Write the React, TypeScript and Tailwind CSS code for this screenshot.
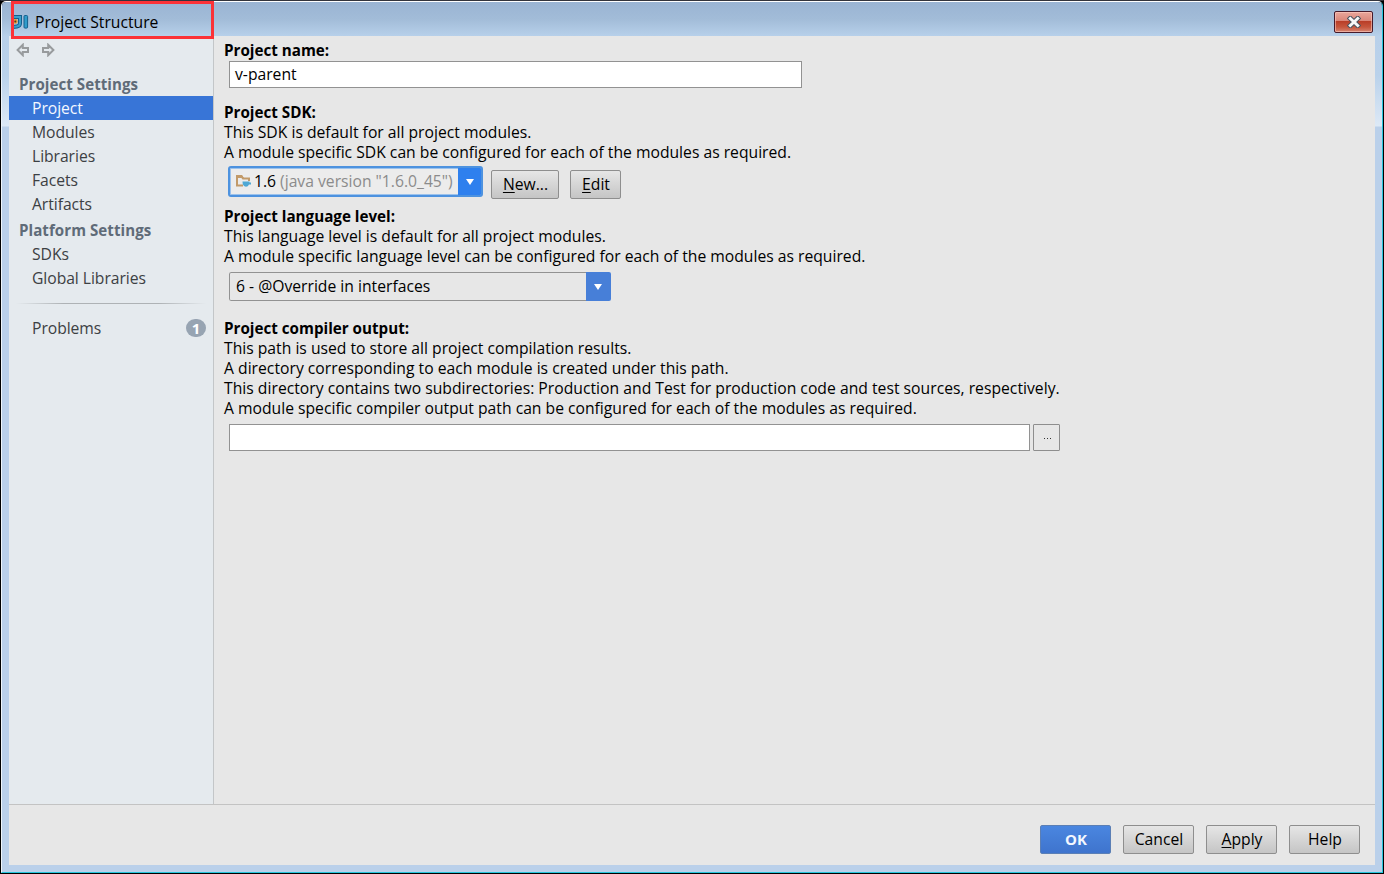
import React from "react";

function NavItem({ label, active = false }: { label: string; active?: boolean }) {
  return (
    <div className={"flex h-6 items-center pt-[2px] pl-[23px] tracking-[-0.05px] " + (active ? "bg-[#3875d7] text-[#f4f8ff]" : "text-[#3c4043]")}>
      {label}
    </div>
  );
}

function Heading({ children }: { children: string }) {
  return <div className="flex h-6 items-center pl-[10px] text-[15.1px] font-bold tracking-[0.05px] text-[#5f6b78]">{children}</div>;
}

function Title({ children }: { children: string }) {
  return <div className="text-[15.2px] leading-5 font-bold">{children}</div>;
}

function Button({ children, primary = false, className = "" }: { children: React.ReactNode; primary?: boolean; className?: string }) {
  return (
    <button
      className={
        "flex h-[29px] items-center justify-center rounded-[2px] border bg-linear-to-b pl-px " +
        (primary
          ? "border-[#5b7fb5] from-[#4a86e0] to-[#3f74cd] text-[15px] font-bold text-[#f3f7ff] "
          : "border-[#8e8e8e] from-[#e6e6e6] to-[#c5c5c5] ") +
        className
      }
    >
      {children}
    </button>
  );
}

function Arrow({ flip = false }: { flip?: boolean }) {
  return (
    <svg width="14" height="14" viewBox="0 0 14 14" className={flip ? "-scale-x-100" : ""}>
      <path d="M1.6 7 6.8 1.8V5H12v4H6.8v3.2Z" fill="none" stroke="#989b9d" strokeWidth="2" />
    </svg>
  );
}

function Caret() {
  return (
    <svg width="8" height="6" viewBox="0 0 8 6">
      <path d="M0 0h8L4 6Z" fill="#fff" />
    </svg>
  );
}

export default function App() {
  return (
    <div className="relative flex h-[874px] w-[1384px] flex-col overflow-hidden border border-t-[#33343c] border-r-black border-b-black border-l-black bg-black font-['Open_Sans','Noto_Sans',sans-serif] text-[15.7px] text-black">
      <div className="flex min-h-0 flex-1 flex-col overflow-hidden rounded-t-[5px] border border-t-white border-r-[#27c5dc] border-b-[#27c5dc] border-l-[#eef5fb]">
        <header className="flex h-[34px] shrink-0 items-center justify-between bg-linear-to-b from-[#9ab4d3] via-[#a2bcd8] to-[#b7d0ea] pr-[9px] pl-[11px]">
          <div className="flex items-center gap-[6px] pt-[5px]">
            <svg width="16" height="14" viewBox="0 0 16 14">
              <path d="M0 2h7v6.2Q7 11 4 11.4L0 12" fill="none" stroke="#145f8d" strokeWidth="4" />
              <path d="M0 2h7v6.2Q7 11 4 11.4L0 12" fill="none" stroke="#399fca" strokeWidth="2" />
              <circle cx="2.3" cy="6.4" r="2.3" fill="#e39a31" />
              <circle cx="2.3" cy="6.4" r="1" fill="#4c3b29" />
              <rect x="11" y=".5" width="3.6" height="12.6" rx="1" fill="#309cca" stroke="#145f8d" />
            </svg>
            <span className="leading-5">Project Structure</span>
          </div>
          <button className="mt-[6px] flex h-[22px] w-[39px] items-center justify-center rounded-[2px] border border-[#461a2a] bg-[linear-gradient(#e9a69b_0%,#d98578_46%,#b93e28_47%,#c6563d_75%,#d58472_100%)] shadow-[inset_0_0_0_1px_rgba(255,210,200,0.55)]">
            <svg width="14" height="12" viewBox="0 0 14 12">
              <path d="m3.300 2.500 7.400 7M10.700 2.500l-7.400 7" stroke="#4b5460" strokeWidth="5" strokeLinecap="square" />
              <path d="m3.300 2.500 7.400 7M10.700 2.500l-7.400 7" stroke="#f7f7f7" strokeWidth="3" strokeLinecap="square" />
            </svg>
          </button>
        </header>

        <div className="flex min-h-0 flex-1 bg-[linear-gradient(#b8d0ea_0px,#bad2eb_40px,#dde9f6_90px,#bad0ea_91px)] pr-[7px] pb-[7px] pl-[7px]">
          <div className="flex min-w-0 flex-1 flex-col bg-[#e7e7e7]">
            <div className="flex min-h-0 flex-1">
              <aside className="flex w-[205px] shrink-0 flex-col border-r border-[#c3c6c8] bg-[#e5eaee]">
                <div className="flex h-9 gap-[11px] pt-[7px] pl-[7px]">
                  <Arrow />
                  <Arrow flip />
                </div>
                <Heading>Project Settings</Heading>
                <NavItem label="Project" active />
                <NavItem label="Modules" />
                <NavItem label="Libraries" />
                <NavItem label="Facets" />
                <NavItem label="Artifacts" />
                <div className="h-[2px]" />
                <Heading>Platform Settings</Heading>
                <NavItem label="SDKs" />
                <NavItem label="Global Libraries" />
                <div className="mx-[7px] mt-[13px] h-px shrink-0 bg-[linear-gradient(90deg,transparent,#aeb2b5_25%,#aeb2b5_75%,transparent)]" />
                <div className="mt-[12px] flex h-6 items-center justify-between pr-[7px] pl-[23px] text-[#3c4043]">
                  <span className="pt-[2px] tracking-[-0.05px]">Problems</span>
                  <span className="flex h-[18px] w-5 items-center justify-center rounded-full bg-[#97a4b2] text-[15px] leading-none font-bold text-white">1</span>
                </div>
              </aside>

              <main className="flex-1 pt-1 pl-[10px] leading-5">
                <Title>Project name:</Title>
                <div className="mt-px ml-[5px] flex h-[27px] w-[573px] items-center border border-[#929292] bg-white pb-px pl-[5px]">v-parent</div>

                <div className="mt-[14px]">
                  <Title>Project SDK:</Title>
                </div>
                <p>This SDK is default for all project modules.</p>
                <p>A module specific SDK can be configured for each of the modules as required.</p>
                <div className="mt-1 ml-1 flex h-[33px] items-start">
                  <div className="flex h-[31px] w-[255px] overflow-hidden rounded-[3px] border-2 border-[#4d92df] bg-[#ececec] shadow-[inset_0_0_0_1px_#9cc2ec]">
                    <div className="flex w-[228px] items-center pb-px pl-[6px] whitespace-nowrap">
                      <svg width="16" height="14" viewBox="0 0 16 14" className="mr-[2px] shrink-0">
                        <path d="M7 11.500H1V2.500h4.500l1.500 2h6V7" fill="none" stroke="#c29a69" strokeWidth="2" />
                        <path d="M0 1h6l2 3H0Z" fill="#c29a69" />
                        <path d="M6.500 7.500h7v1H15v2h-2Q12 12.700 10 12.700 6.500 12.500 6.500 7.500Z" fill="#4fa8d4" />
                      </svg>
                      <span>1.6</span>
                      <span className="ml-[4px] text-[#8b8b8b]">(java version "1.6.0_45")</span>
                    </div>
                    <div className="flex flex-1 items-center justify-center bg-[#2e80ee]">
                      <Caret />
                    </div>
                  </div>
                  <Button className="mt-1 ml-2 w-[68px]"><span className="-mt-px"><u className="underline-offset-2">N</u>ew...</span></Button>
                  <Button className="mt-1 ml-[11px] w-[51px]"><span className="-mt-px"><u className="underline-offset-2">E</u>dit</span></Button>
                </div>

                <div className="mt-[7px]">
                  <Title>Project language level:</Title>
                </div>
                <p>This language level is default for all project modules.</p>
                <p>A module specific language level can be configured for each of the modules as required.</p>
                <div className="mt-[6px] ml-[5px] flex h-[29px] w-[382px] overflow-hidden rounded-[2px]">
                  <div className="flex flex-1 items-center rounded-l-[2px] border border-r-0 border-[#929292] pb-px pl-[6px]">6 - @Override in interfaces</div>
                  <div className="flex w-[25px] items-center justify-center bg-[#477fd8] pr-px">
                    <Caret />
                  </div>
                </div>

                <div className="mt-[17px]">
                  <Title>Project compiler output:</Title>
                </div>
                <p>This path is used to store all project compilation results.</p>
                <p className="tracking-[0.015px]">A directory corresponding to each module is created under this path.</p>
                <p className="tracking-[0.018px]">This directory contains two subdirectories: Production and Test for production code and test sources, respectively.</p>
                <p>A module specific compiler output path can be configured for each of the modules as required.</p>
                <div className="mt-[6px] ml-[5px] flex gap-[3px]">
                  <div className="h-[27px] w-[801px] border border-[#929292] bg-white" />
                  <div className="flex h-[27px] w-[27px] items-center justify-center rounded-[1px] border border-[#8e8e8e] pt-px pl-px">
                    <svg width="7" height="1" viewBox="0 0 7 1">
                      <path d="M0 0h1v1H0ZM3 0h1v1H3ZM6 0h1v1H6Z" fill="#333" />
                    </svg>
                  </div>
                </div>
              </main>
            </div>

            <footer className="flex h-[61px] shrink-0 justify-end gap-3 border-t border-[#c3c3c3] pt-5 pr-[15px]">
              <Button primary className="w-[71px]">OK</Button>
              <Button className="w-[71px]">Cancel</Button>
              <Button className="w-[71px]"><span><u className="underline-offset-2">A</u>pply</span></Button>
              <Button className="w-[71px]">Help</Button>
            </footer>
          </div>
        </div>
      </div>
      <div className="absolute top-0 left-[10px] h-[38px] w-[203px] border-3 border-[#fb3237]" />
    </div>
  );
}
